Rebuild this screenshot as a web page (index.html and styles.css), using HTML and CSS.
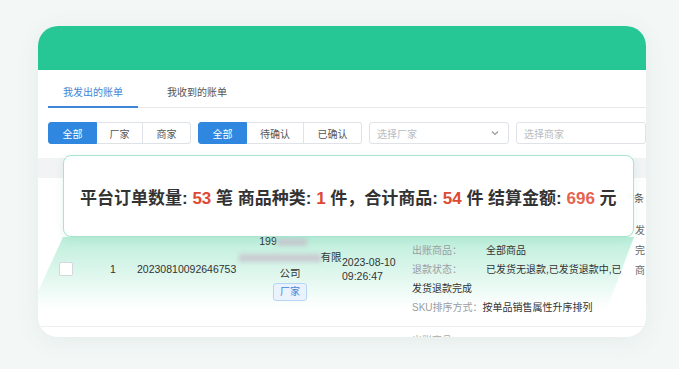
FILE: index.html
```html
<!DOCTYPE html>
<html lang="zh-CN">

<head>
    <meta charset="UTF-8">
    <meta name="viewport" content="width=device-width, initial-scale=1.0">
    <title>对账单</title>
    <link rel="stylesheet" href="styles.css">
</head>

<body>
    <div class="card">
        <div class="card-head"></div>

        <div class="tabs">
            <div class="tab active">我发出的账单</div>
            <div class="tab">我收到的账单</div>
        </div>

        <div class="filters">
            <div class="btn-group">
                <button class="on w49">全部</button>
                <button class="w46">厂家</button>
                <button class="w48">商家</button>
            </div>
            <div class="btn-group">
                <button class="on w49">全部</button>
                <button class="w57">待确认</button>
                <button class="w58">已确认</button>
            </div>
            <div class="select">
                <span>选择厂家</span>
                <svg width="10" height="10" viewBox="0 0 10 10"><path d="M2 3.5 L5 6.5 L8 3.5" fill="none" stroke="#999" stroke-width="1.2"/></svg>
            </div>
            <div class="select input"><span>选择商家</span></div>
        </div>

        <div class="table">
            <div class="thead"></div>
            <div class="sum-row"><span>条</span></div>
            <div class="row">
                <div class="c-check"><span class="checkbox"></span></div>
                <div class="c-idx">1</div>
                <div class="c-no">20230810092646753</div>
                <div class="c-company">
                    <div class="first">199<span class="blur w30"></span></div>
                    <div><span class="blur w70"></span>有限</div>
                    <div>公司</div>
                    <span class="tag">厂家</span>
                </div>
                <div class="c-date">2023-08-10<br>09:26:47</div>
                <div class="c-detail">
                    <div><span class="lbl">出账商品：</span>全部商品</div>
                    <div><span class="lbl">退款状态：</span>已发货无退款,已发货退款中,已</div>
                    <div>发货退款完成</div>
                    <div><span class="lbl lbl-sku">SKU排序方式：</span>按单品销售属性升序排列</div>
                </div>
                <div class="c-last">发<br>完<br>商</div>
            </div>
            <div class="row next">
                <div class="c-detail muted">出账商品：</div>
            </div>
        </div>

        <div class="glow"></div>
        <div class="popup">
            <p>平台订单数量: <b class="num">53</b> 笔 商品种类: <b class="num">1</b> 件，合计商品: <b class="num">54</b> 件 结算金额: <b class="num light">696</b> 元</p>
        </div>
    </div>
</body>

</html>
```

FILE: styles.css
```css
body,
html {
    margin: 0;
}

body {
    background: #f3f8f7;
    font-family: "Liberation Sans", "Noto Sans CJK SC", sans-serif;
    color: #333;
    padding: 26px 0 0 38px;
    height: 369px;
    box-sizing: border-box;
    overflow: hidden;
}

.card {
    position: relative;
    width: 608px;
    height: 311px;
    background: #fff;
    border-radius: 20px;
    overflow: hidden;
    box-shadow: 0 4px 24px rgba(60, 90, 80, 0.08);
}

.card-head {
    height: 44px;
    background: #26c795;
}

/* tabs */
.tabs {
    display: flex;
    gap: 14px;
    margin: 0 0 0 10px;
    border-bottom: 1px solid #e6e8eb;
}

.tab {
    padding: 16px 15px 6px;
    line-height: 14px;
    font-size: 10px;
    color: #555;
    border-bottom: 2px solid transparent;
    margin-bottom: -1px;
}

.tab.active {
    color: #3f86d6;
    border-bottom-color: #3f86d6;
}

/* filters */
.filters {
    display: flex;
    gap: 7px;
    margin: 14px 0 0 10px;
    height: 22px;
}

.btn-group {
    display: flex;
}

.btn-group button {
    height: 22px;
    padding: 0;
    font-family: inherit;
    font-size: 10px;
    color: #555;
    background: #fff;
    border: 1px solid #dfe2e7;
    border-left: 0;
}

.btn-group button:first-child {
    border-left: 1px solid #dfe2e7;
    border-radius: 3px 0 0 3px;
}

.btn-group button:last-child {
    border-radius: 0 3px 3px 0;
}

.btn-group button.on {
    background: #2f87e0;
    border-color: #2f87e0;
    color: #fff;
}

.w46 { width: 46px; }
.w48 { width: 48px; }
.w49 { width: 49px; }
.w57 { width: 57px; }
.w58 { width: 58px; }

.select {
    width: 155px;
    height: 22px;
    box-sizing: border-box;
    border: 1px solid #dfe2e7;
    border-radius: 3px;
    display: flex;
    align-items: center;
    justify-content: space-between;
    padding: 0 8px 0 7px;
    font-size: 10px;
    color: #b8bcc2;
}

.select.input {
    width: 130px;
    flex-shrink: 0;
}

/* table */
.table {
    margin-top: 14px;
    font-size: 10.5px;
}

.thead {
    height: 20px;
    background: #f2f3f5;
}

.sum-row {
    height: 39px;
    display: flex;
    justify-content: flex-end;
    align-items: center;
    padding-right: 2px;
    font-size: 10px;
    color: #555;
}

.row {
    display: flex;
    height: 109px;
    border-bottom: 1px solid #eceef2;
    position: relative;
    z-index: 1;
}

.row > div {
    flex-shrink: 0;
    box-sizing: border-box;
}

.c-check {
    width: 60px;
    padding: 45px 0 0 21px;
}

.checkbox {
    display: block;
    width: 12px;
    height: 12px;
    border: 1px solid #d4d7dc;
    border-radius: 2px;
    background: #fff;
}

.c-idx {
    width: 30px;
    text-align: center;
    padding-top: 44px;
    line-height: 16px;
}

.c-no {
    width: 110px;
    padding: 44px 0 0 9px;
    line-height: 16px;
}

.c-company {
    width: 104px;
    text-align: center;
    padding-top: 16px;
    line-height: 16px;
}

.c-company .first {
    padding-right: 14px;
}

.blur {
    display: inline-block;
    background: #c9ccd1;
    filter: blur(2px);
    height: 8px;
    vertical-align: middle;
}

.w30 { width: 30px; }
.w70 { width: 82px; }

.tag {
    display: inline-block;
    margin-top: 2px;
    padding: 0 6px;
    line-height: 16px;
    font-size: 10px;
    color: #3f86d6;
    background: #eaf3fd;
    border: 1px solid #b7d5f4;
    border-radius: 3px;
}

.c-date {
    width: 68px;
    padding-top: 38px;
    line-height: 14px;
}

.c-detail {
    width: 222px;
    padding: 24px 0 0 2px;
    line-height: 19px;
    font-size: 10px;
}

.lbl {
    display: inline-block;
    width: 74px;
    color: #9a9da3;
}

.lbl-sku {
    width: auto;
}

.c-last {
    padding: 4px 0 0 3px;
    line-height: 20px;
    font-size: 10px;
    color: #666;
}

.row.next {
    height: 30px;
    border: 0;
}

.row.next .c-detail {
    margin-left: 372px;
    padding-top: 4px;
}

.muted {
    color: #aaa;
}

/* highlight popup */
.glow {
    position: absolute;
    left: 0;
    top: 211px;
    width: 608px;
    height: 72px;
    background: linear-gradient(rgba(60, 205, 150, 0.34), rgba(60, 205, 150, 0));
    clip-path: polygon(25px 0, 596px 0, 569px 72px, -8px 72px);
    z-index: 0;
    pointer-events: none;
}

.popup {
    position: absolute;
    left: 25px;
    top: 129px;
    width: 571px;
    height: 82px;
    box-sizing: border-box;
    display: flex;
    align-items: center;
    padding-left: 16px;
    background: #fff;
    border: 1px solid #a7e3cd;
    border-radius: 8px;
    box-shadow: 0 2px 10px rgba(40, 180, 130, 0.12);
    z-index: 3;
}

.popup p {
    margin: 0;
    font-size: 17px;
    font-weight: bold;
    color: #333;
    white-space: nowrap;
}

.num {
    color: #dd4a33;
}

.num.light {
    color: #e5644f;
}
```
